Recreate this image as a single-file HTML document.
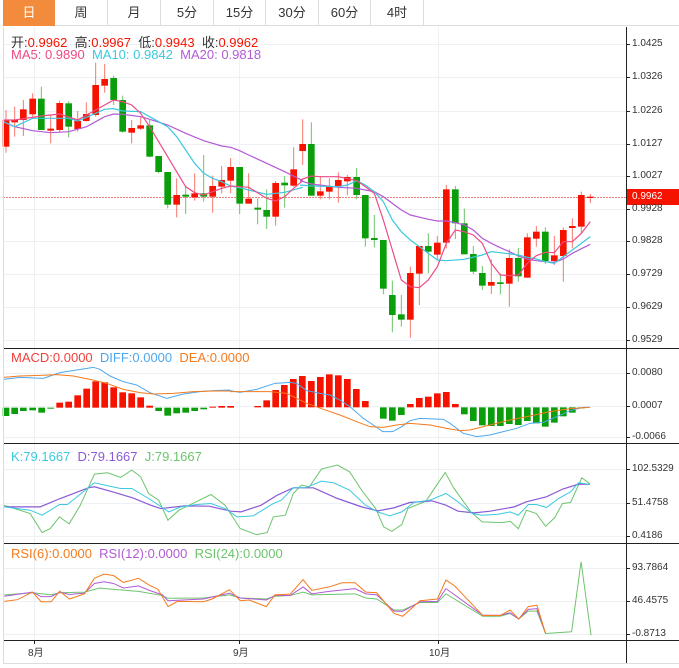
<!DOCTYPE html>
<html><head><meta charset="utf-8"><style>
body{margin:0;width:679px;height:668px;background:#fff;overflow:hidden;position:relative;font-family:"Liberation Sans","Noto Sans CJK SC",sans-serif}
.t{position:absolute;white-space:nowrap}
.tab{position:absolute;top:0;height:26px;line-height:26px;text-align:center;font-size:13px;color:#333;border-right:1px solid #ddd;border-bottom:1px solid #ddd;box-sizing:border-box}
.ax{position:absolute;left:632px;font-size:10px;color:#333;line-height:10px}
.lg{font-size:13px}
</style></head><body>
<div class="tab" style="left:3px;width:52px;background:#f28c3c;color:#fff;border:none">日</div>
<div class="tab" style="left:55px;width:53px">周</div>
<div class="tab" style="left:108px;width:53px">月</div>
<div class="tab" style="left:161px;width:53px">5分</div>
<div class="tab" style="left:214px;width:52px">15分</div>
<div class="tab" style="left:266px;width:53px">30分</div>
<div class="tab" style="left:319px;width:52px">60分</div>
<div class="tab" style="left:371px;width:53px">4时</div>
<div class="tab" style="left:424px;width:255px;border-right:none"></div>

<svg width="679" height="668" style="position:absolute;left:0;top:0" xmlns="http://www.w3.org/2000/svg">
<g stroke="#edf1f4" stroke-width="1">
<line x1="3" y1="44.5" x2="626" y2="44.5"/><line x1="3" y1="77.5" x2="626" y2="77.5"/><line x1="3" y1="111.5" x2="626" y2="111.5"/><line x1="3" y1="144.5" x2="626" y2="144.5"/><line x1="3" y1="176.5" x2="626" y2="176.5"/><line x1="3" y1="209.5" x2="626" y2="209.5"/><line x1="3" y1="241.5" x2="626" y2="241.5"/><line x1="3" y1="274.5" x2="626" y2="274.5"/><line x1="3" y1="307.5" x2="626" y2="307.5"/><line x1="3" y1="340.5" x2="626" y2="340.5"/>
<line x1="3" y1="373.5" x2="626" y2="373.5"/><line x1="3" y1="406.5" x2="626" y2="406.5"/><line x1="3" y1="437.5" x2="626" y2="437.5"/>
<line x1="3" y1="469.5" x2="626" y2="469.5"/><line x1="3" y1="503.5" x2="626" y2="503.5"/><line x1="3" y1="536.5" x2="626" y2="536.5"/>
<line x1="3" y1="568.5" x2="626" y2="568.5"/><line x1="3" y1="601.5" x2="626" y2="601.5"/><line x1="3" y1="634.5" x2="626" y2="634.5"/>
<line x1="34.5" y1="27" x2="34.5" y2="640"/><line x1="239.5" y1="27" x2="239.5" y2="640"/><line x1="438.5" y1="27" x2="438.5" y2="640"/>
</g>
<line x1="3" y1="197.5" x2="626" y2="197.5" stroke="#f08080" stroke-dasharray="2,1"/>

<g transform="translate(0,60) scale(0.33333)">
<g fill="#f51300" stroke="#f7776b">
<line x1="18" y1="150" x2="18" y2="278" vector-effect="non-scaling-stroke"/><rect x="8" y="180" width="20" height="80" stroke="none"/>
<line x1="44" y1="140" x2="44" y2="230" vector-effect="non-scaling-stroke"/><rect x="34" y="180" width="20" height="7" stroke="none"/>
<line x1="70" y1="120" x2="70" y2="228" vector-effect="non-scaling-stroke"/><rect x="60" y="148" width="20" height="32" stroke="none"/>
<line x1="98" y1="100" x2="98" y2="170" vector-effect="non-scaling-stroke"/><rect x="88" y="116" width="20" height="47" stroke="none"/>
<line x1="152" y1="165" x2="152" y2="250" vector-effect="non-scaling-stroke"/><rect x="142" y="206" width="20" height="6" stroke="none"/>
<line x1="179" y1="122" x2="179" y2="218" vector-effect="non-scaling-stroke"/><rect x="169" y="129" width="20" height="81" stroke="none"/>
<line x1="233" y1="153" x2="233" y2="215" vector-effect="non-scaling-stroke"/><rect x="223" y="183" width="20" height="24" stroke="none"/>
<line x1="259" y1="127" x2="259" y2="185" vector-effect="non-scaling-stroke"/><rect x="249" y="162" width="20" height="21" stroke="none"/>
<line x1="287" y1="8" x2="287" y2="170" vector-effect="non-scaling-stroke"/><rect x="277" y="75" width="20" height="90" stroke="none"/>
<line x1="314" y1="12" x2="314" y2="98" vector-effect="non-scaling-stroke"/><rect x="304" y="57" width="20" height="20" stroke="none"/>
<line x1="395" y1="180" x2="395" y2="250" vector-effect="non-scaling-stroke"/><rect x="385" y="204" width="20" height="14" stroke="none"/>
<line x1="422" y1="170" x2="422" y2="210" vector-effect="non-scaling-stroke"/><rect x="412" y="196" width="20" height="10" stroke="none"/>
<line x1="530" y1="355" x2="530" y2="472" vector-effect="non-scaling-stroke"/><rect x="520" y="405" width="20" height="29" stroke="none"/>
<line x1="584" y1="340" x2="584" y2="422" vector-effect="non-scaling-stroke"/><rect x="574" y="400" width="20" height="12" stroke="none"/>
<line x1="638" y1="347" x2="638" y2="458" vector-effect="non-scaling-stroke"/><rect x="628" y="378" width="20" height="32" stroke="none"/>
<line x1="665" y1="318" x2="665" y2="400" vector-effect="non-scaling-stroke"/><rect x="655" y="360" width="20" height="20" stroke="none"/>
<line x1="692" y1="294" x2="692" y2="400" vector-effect="non-scaling-stroke"/><rect x="682" y="321" width="20" height="41" stroke="none"/>
<line x1="746" y1="340" x2="746" y2="431" vector-effect="non-scaling-stroke"/><rect x="736" y="416" width="20" height="15" stroke="none"/>
<line x1="827" y1="363" x2="827" y2="497" vector-effect="non-scaling-stroke"/><rect x="817" y="369" width="20" height="101" stroke="none"/>
<line x1="881" y1="262" x2="881" y2="380" vector-effect="non-scaling-stroke"/><rect x="871" y="328" width="20" height="49" stroke="none"/>
</g>
<g fill="#0a9e0a" stroke="#6cc46c">
<line x1="124" y1="80" x2="124" y2="210" vector-effect="non-scaling-stroke"/><rect x="114" y="116" width="20" height="94" stroke="none"/>
<line x1="206" y1="124" x2="206" y2="232" vector-effect="non-scaling-stroke"/><rect x="196" y="130" width="20" height="70" stroke="none"/>
<line x1="341" y1="47" x2="341" y2="135" vector-effect="non-scaling-stroke"/><rect x="331" y="54" width="20" height="66" stroke="none"/>
<line x1="368" y1="107" x2="368" y2="218" vector-effect="non-scaling-stroke"/><rect x="358" y="120" width="20" height="95" stroke="none"/>
<line x1="449" y1="180" x2="449" y2="292" vector-effect="non-scaling-stroke"/><rect x="439" y="196" width="20" height="94" stroke="none"/>
<line x1="476" y1="288" x2="476" y2="340" vector-effect="non-scaling-stroke"/><rect x="466" y="288" width="20" height="48" stroke="none"/>
<line x1="503" y1="336" x2="503" y2="445" vector-effect="non-scaling-stroke"/><rect x="493" y="336" width="20" height="98" stroke="none"/>
<line x1="557" y1="380" x2="557" y2="462" vector-effect="non-scaling-stroke"/><rect x="547" y="404" width="20" height="6" stroke="none"/>
<line x1="611" y1="285" x2="611" y2="425" vector-effect="non-scaling-stroke"/><rect x="601" y="400" width="20" height="10" stroke="none"/>
<line x1="719" y1="321" x2="719" y2="462" vector-effect="non-scaling-stroke"/><rect x="709" y="321" width="20" height="110" stroke="none"/>
<line x1="773" y1="415" x2="773" y2="493" vector-effect="non-scaling-stroke"/><rect x="763" y="443" width="20" height="6" stroke="none"/>
<line x1="800" y1="388" x2="800" y2="507" vector-effect="non-scaling-stroke"/><rect x="790" y="450" width="20" height="20" stroke="none"/>
<line x1="854" y1="348" x2="854" y2="443" vector-effect="non-scaling-stroke"/><rect x="844" y="368" width="20" height="8" stroke="none"/>
</g>
<g fill="none" stroke-width="1.2">
<polyline vector-effect="non-scaling-stroke" stroke="#b35ad6" points="10,185 44,200 98,212 152,218 206,215 260,200 314,170 341,162 368,163 422,170 449,178 503,195 557,220 611,242 665,258 692,262 719,272 746,285 800,310 854,335 908,362"/>
<polyline vector-effect="non-scaling-stroke" stroke="#3cc8e0" points="10,185 44,200 98,175 152,175 206,175 233,183 287,160 314,148 341,146 368,153 422,155 449,170 476,185 503,200 530,230 557,270 584,310 611,340 638,355 665,365 692,378 719,383 746,390 800,403 854,397 908,382"/>
<polyline vector-effect="non-scaling-stroke" stroke="#ee4a86" points="10,180 44,180 124,168 179,162 233,180 287,150 341,120 368,125 395,135 422,160 449,200 503,290 557,380 584,398 611,405 638,395 665,385 692,378 746,382 800,415 827,423 854,410 881,385 908,362"/>
</g>
</g>

<g transform="translate(300,110) scale(0.33333)">
<g fill="#f51300" stroke="#f7776b">
<line x1="8" y1="28" x2="8" y2="165" vector-effect="non-scaling-stroke"/><rect x="-2" y="102" width="20" height="21" stroke="none"/>
<line x1="61" y1="200" x2="61" y2="268" vector-effect="non-scaling-stroke"/><rect x="51" y="244" width="20" height="13" stroke="none"/>
<line x1="88" y1="205" x2="88" y2="268" vector-effect="non-scaling-stroke"/><rect x="78" y="228" width="20" height="17" stroke="none"/>
<line x1="115" y1="187" x2="115" y2="278" vector-effect="non-scaling-stroke"/><rect x="105" y="210" width="20" height="18" stroke="none"/>
<line x1="142" y1="195" x2="142" y2="256" vector-effect="non-scaling-stroke"/><rect x="132" y="201" width="20" height="13" stroke="none"/>
<line x1="331" y1="470" x2="331" y2="683" vector-effect="non-scaling-stroke"/><rect x="321" y="489" width="20" height="140" stroke="none"/>
<line x1="358" y1="408" x2="358" y2="585" vector-effect="non-scaling-stroke"/><rect x="348" y="408" width="20" height="83" stroke="none"/>
<line x1="412" y1="378" x2="412" y2="450" vector-effect="non-scaling-stroke"/><rect x="402" y="398" width="20" height="36" stroke="none"/>
<line x1="439" y1="225" x2="439" y2="415" vector-effect="non-scaling-stroke"/><rect x="429" y="238" width="20" height="160" stroke="none"/>
<line x1="574" y1="448" x2="574" y2="552" vector-effect="non-scaling-stroke"/><rect x="564" y="516" width="20" height="11" stroke="none"/>
<line x1="628" y1="418" x2="628" y2="590" vector-effect="non-scaling-stroke"/><rect x="618" y="444" width="20" height="77" stroke="none"/>
<line x1="682" y1="370" x2="682" y2="503" vector-effect="non-scaling-stroke"/><rect x="672" y="382" width="20" height="121" stroke="none"/>
<line x1="709" y1="348" x2="709" y2="410" vector-effect="non-scaling-stroke"/><rect x="699" y="365" width="20" height="21" stroke="none"/>
<line x1="763" y1="378" x2="763" y2="465" vector-effect="non-scaling-stroke"/><rect x="753" y="436" width="20" height="17" stroke="none"/>
<line x1="790" y1="352" x2="790" y2="515" vector-effect="non-scaling-stroke"/><rect x="780" y="360" width="20" height="78" stroke="none"/>
<line x1="817" y1="325" x2="817" y2="415" vector-effect="non-scaling-stroke"/><rect x="807" y="348" width="20" height="6" stroke="none"/>
<line x1="844" y1="245" x2="844" y2="370" vector-effect="non-scaling-stroke"/><rect x="834" y="255" width="20" height="95" stroke="none"/>
<line x1="871" y1="252" x2="871" y2="279" vector-effect="non-scaling-stroke"/><rect x="861" y="260" width="20" height="4" stroke="none"/>
</g>
<g fill="#0a9e0a" stroke="#6cc46c">
<line x1="34" y1="37" x2="34" y2="257" vector-effect="non-scaling-stroke"/><rect x="24" y="102" width="20" height="155" stroke="none"/>
<line x1="170" y1="174" x2="170" y2="268" vector-effect="non-scaling-stroke"/><rect x="160" y="201" width="20" height="54" stroke="none"/>
<line x1="196" y1="255" x2="196" y2="410" vector-effect="non-scaling-stroke"/><rect x="186" y="255" width="20" height="130" stroke="none"/>
<line x1="223" y1="315" x2="223" y2="412" vector-effect="non-scaling-stroke"/><rect x="213" y="384" width="20" height="6" stroke="none"/>
<line x1="250" y1="390" x2="250" y2="553" vector-effect="non-scaling-stroke"/><rect x="240" y="390" width="20" height="146" stroke="none"/>
<line x1="277" y1="512" x2="277" y2="667" vector-effect="non-scaling-stroke"/><rect x="267" y="555" width="20" height="60" stroke="none"/>
<line x1="304" y1="555" x2="304" y2="650" vector-effect="non-scaling-stroke"/><rect x="294" y="613" width="20" height="16" stroke="none"/>
<line x1="385" y1="370" x2="385" y2="490" vector-effect="non-scaling-stroke"/><rect x="375" y="408" width="20" height="17" stroke="none"/>
<line x1="466" y1="228" x2="466" y2="387" vector-effect="non-scaling-stroke"/><rect x="456" y="238" width="20" height="102" stroke="none"/>
<line x1="493" y1="296" x2="493" y2="433" vector-effect="non-scaling-stroke"/><rect x="483" y="340" width="20" height="93" stroke="none"/>
<line x1="520" y1="408" x2="520" y2="493" vector-effect="non-scaling-stroke"/><rect x="510" y="432" width="20" height="53" stroke="none"/>
<line x1="547" y1="468" x2="547" y2="540" vector-effect="non-scaling-stroke"/><rect x="537" y="489" width="20" height="38" stroke="none"/>
<line x1="601" y1="490" x2="601" y2="553" vector-effect="non-scaling-stroke"/><rect x="591" y="517" width="20" height="5" stroke="none"/>
<line x1="655" y1="414" x2="655" y2="515" vector-effect="non-scaling-stroke"/><rect x="645" y="444" width="20" height="55" stroke="none"/>
<line x1="736" y1="352" x2="736" y2="462" vector-effect="non-scaling-stroke"/><rect x="726" y="365" width="20" height="88" stroke="none"/>
</g>
<g fill="none" stroke-width="1.2">
<polyline vector-effect="non-scaling-stroke" stroke="#b35ad6" points="0,212 34,222 115,232 170,235 196,240 223,245 250,260 277,280 304,300 331,315 385,328 412,333 439,333 466,338 493,345 520,360 547,385 574,400 601,413 628,425 655,438 682,448 709,452 736,455 763,457 790,447 817,430 844,416 871,403"/>
<polyline vector-effect="non-scaling-stroke" stroke="#3cc8e0" points="0,225 34,228 115,230 142,225 170,212 196,225 223,245 250,275 277,330 304,365 331,390 358,410 385,430 412,450 439,452 493,448 547,435 574,425 601,428 655,435 682,442 709,447 736,455 763,460 790,440 817,420 844,400 871,380"/>
<polyline vector-effect="non-scaling-stroke" stroke="#ee4a86" points="0,210 34,198 61,200 115,200 170,212 196,230 223,250 250,330 277,420 304,510 331,530 358,533 385,510 412,470 439,400 466,360 493,365 520,375 547,400 574,460 601,495 628,497 655,495 682,460 709,437 736,427 763,428 790,395 817,395 844,370 871,335"/>
</g>
</g>

<g transform="translate(0,340) scale(0.33333)">
<g fill="#0a9e0a">
<rect x="8" y="203" width="20" height="25"/><rect x="34" y="203" width="20" height="19"/><rect x="60" y="203" width="20" height="10"/><rect x="88" y="203" width="20" height="8"/><rect x="115" y="203" width="20" height="15"/><rect x="142" y="203" width="20" height="3"/>
<rect x="466" y="203" width="20" height="10"/><rect x="493" y="203" width="20" height="24"/><rect x="520" y="203" width="20" height="17"/><rect x="547" y="203" width="20" height="15"/><rect x="574" y="203" width="20" height="10"/><rect x="601" y="203" width="20" height="5"/>
</g>
<g fill="#f51300">
<rect x="169" y="188" width="20" height="15"/><rect x="196" y="185" width="20" height="18"/><rect x="223" y="166" width="20" height="37"/><rect x="250" y="146" width="20" height="57"/><rect x="277" y="124" width="20" height="79"/><rect x="304" y="127" width="20" height="76"/><rect x="331" y="142" width="20" height="61"/><rect x="358" y="157" width="20" height="46"/><rect x="385" y="160" width="20" height="43"/><rect x="412" y="172" width="20" height="31"/><rect x="439" y="197" width="20" height="6"/>
<rect x="628" y="200" width="20" height="3"/><rect x="655" y="198" width="20" height="5"/><rect x="682" y="198" width="20" height="5"/>
</g>
<polyline fill="none" vector-effect="non-scaling-stroke" stroke="#4ea8ef" points="10,118 60,112 130,115 180,98 230,90 280,82 300,88 330,108 370,125 410,135 450,158 500,175 550,162 600,155 640,152 690,150"/>
<polyline fill="none" vector-effect="non-scaling-stroke" stroke="#f57a1c" points="10,112 60,108 120,106 170,104 220,108 270,118 320,130 370,148 420,158 460,162 520,160 580,155 640,153 690,153"/>
</g>
<g transform="translate(230,350) scale(0.33333)">
<g fill="#f51300">
<rect x="73" y="168" width="20" height="4"/><rect x="100" y="151" width="20" height="21"/><rect x="127" y="120" width="20" height="52"/><rect x="153" y="105" width="20" height="67"/><rect x="180" y="87" width="20" height="85"/><rect x="207" y="78" width="20" height="94"/><rect x="234" y="93" width="20" height="79"/><rect x="261" y="81" width="20" height="91"/><rect x="288" y="73" width="20" height="99"/><rect x="315" y="76" width="20" height="96"/><rect x="342" y="87" width="20" height="85"/><rect x="369" y="117" width="20" height="55"/><rect x="396" y="153" width="20" height="19"/>
<rect x="531" y="162" width="20" height="10"/><rect x="558" y="144" width="20" height="28"/><rect x="585" y="140" width="20" height="32"/><rect x="612" y="130" width="20" height="42"/><rect x="639" y="126" width="20" height="46"/><rect x="666" y="162" width="20" height="10"/>
</g>
<g fill="#0a9e0a">
<rect x="450" y="172" width="20" height="34"/><rect x="477" y="172" width="20" height="40"/><rect x="504" y="172" width="20" height="23"/>
<rect x="693" y="172" width="20" height="21"/><rect x="720" y="172" width="20" height="41"/><rect x="747" y="172" width="20" height="54"/><rect x="774" y="172" width="20" height="56"/><rect x="801" y="172" width="20" height="56"/><rect x="828" y="172" width="20" height="50"/><rect x="855" y="172" width="20" height="53"/><rect x="882" y="172" width="20" height="41"/><rect x="909" y="172" width="20" height="48"/><rect x="936" y="172" width="20" height="58"/><rect x="963" y="172" width="20" height="46"/><rect x="990" y="172" width="20" height="27"/><rect x="1017" y="172" width="20" height="16"/><rect x="1044" y="172" width="20" height="3"/>
</g>
<polyline fill="none" vector-effect="non-scaling-stroke" stroke="#4ea8ef" points="0,122 30,127 80,118 135,100 180,97 200,100 230,122 270,130 300,135 330,150 360,170 400,205 430,225 458,245 488,245 515,230 540,212 570,205 640,208 660,220 700,250 740,260 780,255 820,245 860,235 900,220 940,217 980,200 1020,182 1060,172 1080,172"/>
<polyline fill="none" vector-effect="non-scaling-stroke" stroke="#f57a1c" points="0,125 120,125 170,130 230,160 280,178 330,195 380,215 420,230 460,232 500,225 540,220 600,225 650,235 690,242 720,240 780,225 840,210 900,198 960,185 1020,176 1078,172"/>
</g>

<g transform="translate(0,445) scale(0.4018,0.3344)" fill="none">
<polyline vector-effect="non-scaling-stroke" stroke="#6cc46c" points="10,180 75,205 105,262 125,250 148,215 172,236 200,180 235,87 268,83 300,97 328,75 350,95 370,145 395,165 418,225 445,195 488,170 525,148 560,180 598,250 638,268 665,262 680,215 710,210 730,145 750,120 770,125 800,72 840,60 870,80 900,135 935,190 955,245 975,258 1000,238 1015,190 1060,168 1108,82 1130,130 1172,200 1200,230 1250,232 1270,228 1290,250 1310,195 1335,205 1358,243 1380,218 1400,175 1420,172 1448,98 1468,116"/>
<polyline vector-effect="non-scaling-stroke" stroke="#8a5ad6" stroke-width="1.2" points="10,185 100,185 150,160 220,128 235,125 280,140 330,158 375,180 400,190 460,182 520,183 575,198 600,200 650,180 690,150 730,128 780,128 840,160 900,185 940,197 980,188 1020,172 1075,167 1110,180 1140,198 1180,203 1220,198 1280,185 1310,170 1360,155 1400,132 1440,117 1468,118"/>
<polyline vector-effect="non-scaling-stroke" stroke="#3cc8e0" points="10,185 75,195 105,210 148,178 168,178 235,113 268,122 300,130 328,130 370,160 420,200 450,185 490,178 525,175 560,190 590,215 630,212 680,175 700,165 730,128 760,128 800,108 830,113 870,135 910,180 940,200 970,212 1000,200 1030,172 1070,165 1110,145 1140,170 1175,205 1200,210 1240,207 1270,200 1290,210 1315,178 1335,178 1360,187 1390,160 1420,140 1440,113 1468,118"/>
</g>

<g transform="translate(0,530) scale(0.4330,0.345)" fill="none">
<polyline vector-effect="non-scaling-stroke" stroke="#6cc46c" points="10,188 75,182 118,188 138,182 195,180 230,168 262,172 320,178 375,190 388,198 470,197 530,188 555,197 615,200 635,192 670,190 700,180 720,188 820,185 845,197 870,200 910,232 930,232 970,210 1010,210 1030,185 1115,250 1155,250 1178,242 1198,258 1220,235 1240,235 1260,300 1320,295 1342,92 1365,305"/>
<polyline vector-effect="non-scaling-stroke" stroke="#b35ad6" points="10,192 75,180 95,193 118,193 138,180 160,187 195,183 218,155 240,150 262,155 285,168 320,162 345,175 375,188 388,205 470,200 530,183 555,197 615,203 635,190 670,190 700,165 720,185 760,178 820,170 845,185 870,188 910,235 930,236 970,208 1010,207 1030,170 1115,247 1155,247 1178,240 1198,258 1220,230 1240,228 1260,300"/>
<polyline vector-effect="non-scaling-stroke" stroke="#f57a1c" points="10,207 40,202 75,180 95,208 118,208 138,177 160,200 195,185 218,140 240,128 262,132 285,152 320,140 345,160 365,172 388,222 410,207 470,208 490,200 530,173 555,205 575,203 615,222 635,188 670,186 700,144 720,175 760,165 790,153 820,153 845,180 870,182 910,242 930,250 970,205 1010,200 1030,145 1050,162 1115,248 1155,248 1178,232 1198,258 1220,222 1240,218 1260,300"/>
</g>

<g stroke="#222" stroke-width="1">
<line x1="3" y1="348.5" x2="679" y2="348.5"/><line x1="3" y1="443.5" x2="679" y2="443.5"/><line x1="3" y1="543.5" x2="679" y2="543.5"/><line x1="3" y1="640.5" x2="679" y2="640.5"/>
<line x1="626.5" y1="27" x2="626.5" y2="663"/>
</g>
<line x1="3.5" y1="27" x2="3.5" y2="663" stroke="#ddd"/>
<line x1="3" y1="663.5" x2="679" y2="663.5" stroke="#ddd"/>
<g stroke="#222">
<line x1="626" y1="44.5" x2="630" y2="44.5"/><line x1="626" y1="77.5" x2="630" y2="77.5"/><line x1="626" y1="111.5" x2="630" y2="111.5"/><line x1="626" y1="144.5" x2="630" y2="144.5"/><line x1="626" y1="176.5" x2="630" y2="176.5"/><line x1="626" y1="209.5" x2="630" y2="209.5"/><line x1="626" y1="241.5" x2="630" y2="241.5"/><line x1="626" y1="274.5" x2="630" y2="274.5"/><line x1="626" y1="307.5" x2="630" y2="307.5"/><line x1="626" y1="340.5" x2="630" y2="340.5"/>
<line x1="626" y1="373.5" x2="630" y2="373.5"/><line x1="626" y1="406.5" x2="630" y2="406.5"/><line x1="626" y1="437.5" x2="630" y2="437.5"/>
<line x1="626" y1="469.5" x2="630" y2="469.5"/><line x1="626" y1="503.5" x2="630" y2="503.5"/><line x1="626" y1="536.5" x2="630" y2="536.5"/>
<line x1="626" y1="568.5" x2="630" y2="568.5"/><line x1="626" y1="601.5" x2="630" y2="601.5"/><line x1="626" y1="634.5" x2="630" y2="634.5"/>
<line x1="34.5" y1="640" x2="34.5" y2="644"/><line x1="239.5" y1="640" x2="239.5" y2="644"/><line x1="438.5" y1="640" x2="438.5" y2="644"/>
</g>
<rect x="627" y="189" width="52" height="16" fill="#f51300"/>
</svg>

<div class="t lg" style="left:11px;top:32px;color:#333">开:<span style="color:#f51300">0.9962</span>&nbsp; 高:<span style="color:#f51300">0.9967</span>&nbsp; 低:<span style="color:#f51300">0.9943</span>&nbsp; 收:<span style="color:#f51300">0.9962</span></div>
<div class="t lg" style="left:11px;top:47px"><span style="color:#ee4a86">MA5: 0.9890</span>&nbsp; <span style="color:#3cc8e0">MA10: 0.9842</span>&nbsp; <span style="color:#b35ad6">MA20: 0.9818</span></div>
<div class="t lg" style="left:11px;top:350px"><span style="color:#f0413a">MACD:0.0000</span>&nbsp; <span style="color:#4ea8ef">DIFF:0.0000</span>&nbsp; <span style="color:#f57a1c">DEA:0.0000</span></div>
<div class="t lg" style="left:11px;top:449px"><span style="color:#3cc8e0">K:79.1667</span>&nbsp; <span style="color:#8a5ad6">D:79.1667</span>&nbsp; <span style="color:#6cc46c">J:79.1667</span></div>
<div class="t lg" style="left:11px;top:546px"><span style="color:#f57a1c">RSI(6):0.0000</span>&nbsp; <span style="color:#b35ad6">RSI(12):0.0000</span>&nbsp; <span style="color:#6cc46c">RSI(24):0.0000</span></div>

<div class="ax" style="top:39px">1.0425</div>
<div class="ax" style="top:72px">1.0326</div>
<div class="ax" style="top:106px">1.0226</div>
<div class="ax" style="top:139px">1.0127</div>
<div class="ax" style="top:171px">1.0027</div>
<div class="ax" style="top:192px;color:#fff">0.9962</div>
<div class="ax" style="top:204px">0.9928</div>
<div class="ax" style="top:236px">0.9828</div>
<div class="ax" style="top:269px">0.9729</div>
<div class="ax" style="top:302px">0.9629</div>
<div class="ax" style="top:335px">0.9529</div>
<div class="ax" style="top:368px">0.0080</div>
<div class="ax" style="top:401px">0.0007</div>
<div class="ax" style="top:432px">-0.0066</div>
<div class="ax" style="top:464px">102.5329</div>
<div class="ax" style="top:498px">51.4758</div>
<div class="ax" style="top:531px">0.4186</div>
<div class="ax" style="top:563px">93.7864</div>
<div class="ax" style="top:596px">46.4575</div>
<div class="ax" style="top:629px">-0.8713</div>
<div class="t" style="left:28px;top:644px;font-size:10px;color:#333">8月</div>
<div class="t" style="left:233px;top:644px;font-size:10px;color:#333">9月</div>
<div class="t" style="left:429px;top:644px;font-size:10px;color:#333">10月</div>
</body></html>
